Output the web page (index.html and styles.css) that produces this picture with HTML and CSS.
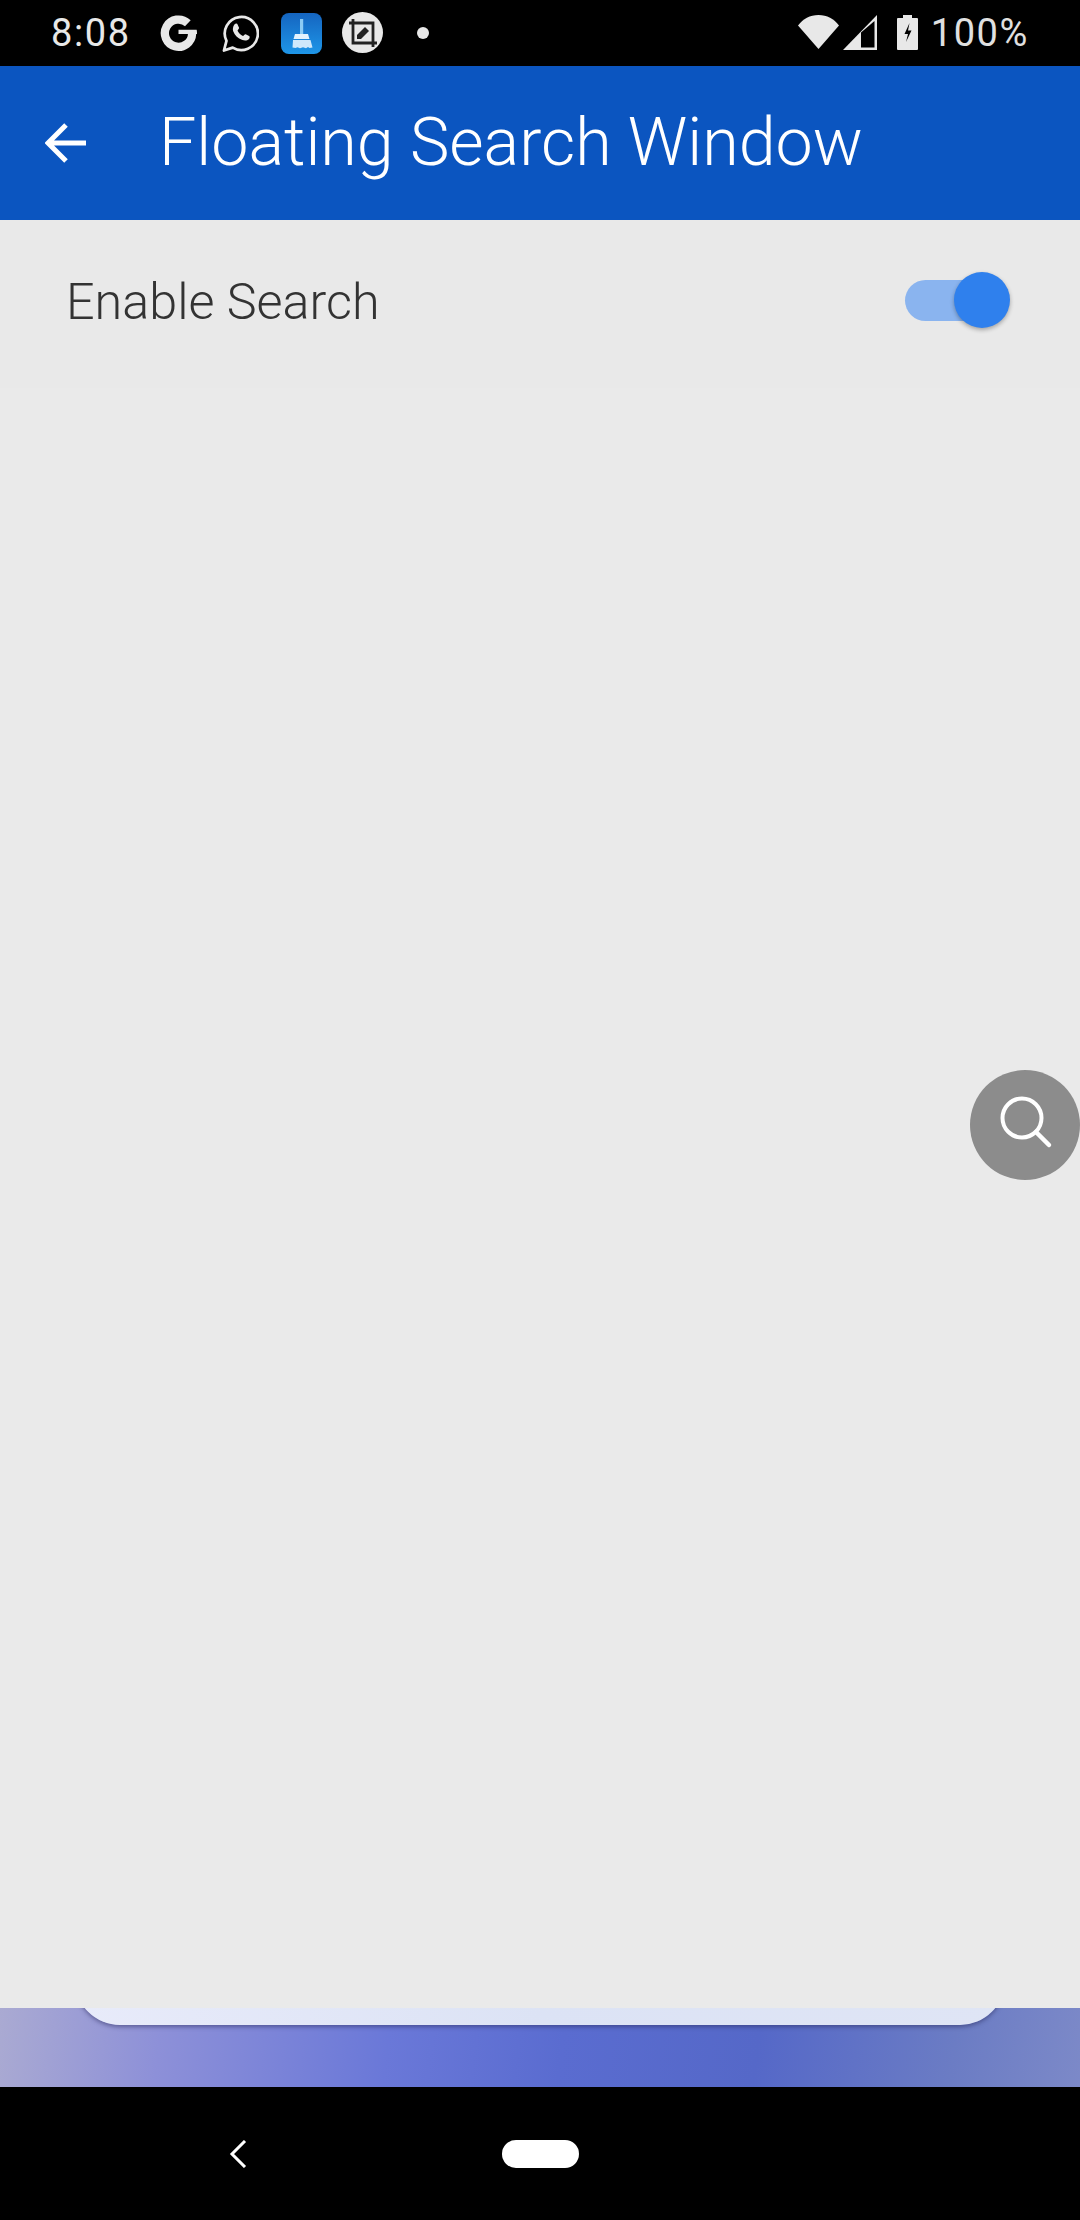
FILE: index.html
```html
<!DOCTYPE html>
<html lang="en">
<head>
<meta charset="utf-8">
<title>Floating Search Window</title>
<link rel="stylesheet" href="styles.css">
</head>
<body>
<div class="phone">
  <header class="status">
    <div class="status-left">
      <span class="time">8:08</span>
      <svg class="ic ic-g" viewBox="0 0 38 38"><path d="M33 19.500A14 14 0 1 1 28.600 9" fill="none" stroke="#e8e8e8" stroke-width="8.500"/><path d="M19 15.600h18.600q.5 2 .4 4.400h-19z" fill="#e8e8e8"/></svg>
      <svg class="ic ic-wa" viewBox="0 0 38 38"><path d="M2 37l2.600-10A17 17 0 1 1 11 34z" fill="none" stroke="#e8e8e8" stroke-width="2.800" stroke-linejoin="round"/><path d="M12.500 10.500c1.500-1.500 3-1.500 3.500-.3l1.500 3.500c.3.800-1.500 2.400-1.500 3 1 2.300 3 4.300 5.500 5.300.7 0 2-2 2.800-1.700l3.500 1.700c1 .5.700 2.300-.3 3.400-1.500 1.500-4 1.800-6.500.9-5-1.800-8-5-9.500-9-.7-2.300-.2-4.800 1-6.800z" fill="#e8e8e8"/></svg>
      <svg class="ic ic-clean" viewBox="0 0 41 41">
        <defs><linearGradient id="cleanBg" x1="0" y1="0" x2="0" y2="1"><stop offset="0" stop-color="#1565c0"/><stop offset="1" stop-color="#1e96e8"/></linearGradient></defs>
        <rect width="41" height="41" rx="8" fill="url(#cleanBg)"/>
        <rect x="19" y="6" width="3.200" height="15" fill="#8ccbf5"/>
        <path d="M14 21h13l1.500 5h-16z" fill="#e3f2fd"/>
        <path d="M12 27h17.500l2 7.500-3 .5-1.500-1-2 1.200-3-1-3 1-2.500-1-2 .8-3-.5z" fill="#cfe8fb"/>
      </svg>
      <svg class="ic ic-crop" viewBox="0 0 41 41">
        <circle cx="20.500" cy="20.500" r="20.500" fill="#e8e8e8"/>
        <path d="M11 7v24h24M7 11h24v24" fill="none" stroke="#222" stroke-width="2.800"/>
        <path d="M15 27v-4l8-8 4 4-8 8z" fill="#222"/>
      </svg>
      <span class="dot"></span>
    </div>
    <div class="status-right">
      <svg class="ic ic-wifi" viewBox="0 0 41 34"><path d="M0 10.500C5 4 12 0 20.500 0S36 4 41 10.500L20.500 34z" fill="#e8e8e8"/></svg>
      <svg class="ic ic-signal" viewBox="0 0 34 35"><path d="M0 35L34 0v35z" fill="#e8e8e8"/><path d="M18 17.500L31.500 6v26.500H18z" fill="#000"/></svg>
      <svg class="ic ic-batt" viewBox="0 0 21 35"><path d="M6 0h9v3h5q1 0 1 1v30q0 1-1 1H1q-1 0-1-1V4q0-1 1-1h5z" fill="#e8e8e8"/><path d="M12.500 8l-5 11h3.500l-2 8 5.500-11.500h-3.500z" fill="#000"/></svg>
      <span class="pct">100%</span>
    </div>
  </header>

  <div class="appbar">
    <svg class="back" viewBox="0 0 43 40"><path d="M41 20H4M21 2L3 20l18 18" fill="none" stroke="#fff" stroke-width="5"/></svg>
    <h1 class="title">Floating Search Window</h1>
  </div>

  <main class="content">
    <div class="row">
      <span class="label">Enable Search</span>
      <div class="switch"><span class="thumb"></span></div>
    </div>
    <button class="fab" aria-label="Search">
      <svg viewBox="0 0 64 64" class="fab-icon"><circle cx="27" cy="25" r="19.500" fill="none" stroke="#fff" stroke-width="4"/><path d="M41 39l13 13" fill="none" stroke="#fff" stroke-width="4.500" stroke-linecap="round"/></svg>
    </button>
  </main>

  <div class="strip"><div class="peek"></div></div>

  <nav class="navbar">
    <svg class="nav-back" viewBox="0 0 18 28"><path d="M16 1L3 14l13 13" fill="none" stroke="#fff" stroke-width="3"/></svg>
    <span class="home"></span>
  </nav>
</div>
</body>
</html>
```
FILE: styles.css
```css
* { box-sizing: border-box; }
html, body { margin: 0; padding: 0; background: #000; }
.phone {
  width: 1080px;
  height: 2220px;
  display: flex;
  flex-direction: column;
  overflow: hidden;
  font-family: Roboto, "Liberation Sans", sans-serif;
}
.status {
  height: 66px;
  flex: none;
  background: #000;
  color: #e8e8e8;
  display: flex;
  justify-content: space-between;
  align-items: center;
  padding: 0 51px;
}
.status-left, .status-right { display: flex; align-items: center; }
.ic { display: block; flex: none; }
.time { font-size: 38px; width: 109px; letter-spacing: 1.6px; line-height: 66px; }
.ic-g { width: 37px; height: 38px; margin-right: 25px; }
.ic-wa { width: 37px; height: 38px; margin-right: 22px; }
.ic-clean { width: 41px; height: 41px; margin-right: 20px; }
.ic-crop { width: 41px; height: 41px; margin-top: -2px; margin-right: 34px; }
.dot { width: 12px; height: 12px; border-radius: 50%; background: #e8e8e8; }
.ic-wifi { width: 41px; height: 34px; margin-top: -2px; margin-right: 4px; }
.ic-signal { width: 34px; height: 35px; margin-top: -1px; margin-right: 20px; }
.ic-batt { width: 21px; height: 35px; margin-top: -1px; margin-right: 13px; }
.pct { font-size: 38px; letter-spacing: 1.6px; line-height: 66px; color: #e0e0e0; }

.appbar {
  height: 154px;
  flex: none;
  background: #0b55c0;
  display: flex;
  align-items: center;
  padding-left: 45px;
}
.back { width: 43px; height: 40px; margin-right: 71px; flex: none; }
.title {
  margin: 0 0 2px;
  color: #fff;
  font-size: 66.400px;
  font-weight: 300;
  line-height: 1;
}

.content {
  flex: 1;
  background: #eaeaea;
  position: relative;
  min-height: 0;
}
.row {
  height: 168px;
  display: flex;
  justify-content: space-between;
  align-items: center;
  padding: 0 70px 5px 66px;
  background: #e9e9e9;
}
.label { font-size: 50.300px; font-weight: 300; color: #333; }
.switch {
  width: 85px;
  height: 41px;
  border-radius: 21px;
  background: #8ab4ef;
  position: relative;
  margin-right: 20px;
  margin-bottom: 2px;
}
.thumb {
  position: absolute;
  right: -20px;
  top: -8px;
  width: 56px;
  height: 56px;
  border-radius: 50%;
  background: #2f80ed;
  box-shadow: 0 2px 4px rgba(0,0,0,.3);
}
.fab {
  position: absolute;
  left: 970px;
  top: 850px;
  width: 110px;
  height: 110px;
  padding: 0;
  border: 0;
  border-radius: 50%;
  background: #8c8c8c;
  display: flex;
  align-items: center;
  justify-content: center;
  overflow: hidden;
}
.fab-icon { width: 64px; height: 64px; margin-left: 4px; }

.strip {
  height: 79px;
  flex: none;
  overflow: hidden;
  background: linear-gradient(97deg, #aaaad2 0%, #8d90d8 15%, #6a78d8 36%, #5a6cd0 52%, #5568c8 70%, #6b7cc4 88%, #7c89c8 100%);
}
.peek {
  height: 90px;
  margin: -73px 75px 0;
  border-radius: 45px;
  background: linear-gradient(90deg, #e8ebfa, #dce3f5 50%, #dfe5f5);
  box-shadow: 0 2px 4px rgba(40,40,90,.5);
}

.navbar {
  height: 133px;
  flex: none;
  background: #000;
  display: flex;
  align-items: center;
  padding-left: 229px;
}
.nav-back { width: 18px; height: 28px; margin-right: 255px; flex: none; }
.home { width: 77px; height: 28px; border-radius: 14px; background: #fff; }
```
